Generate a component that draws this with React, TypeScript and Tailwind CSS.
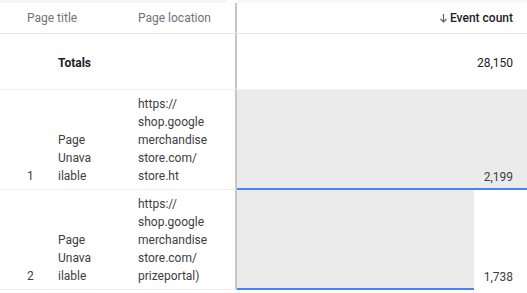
import { ReactNode } from "react";

type Row = {
  n: number;
  title: string[];
  location: string[];
  count: string;
  share: number;
};

const rows: Row[] = [
  {
    n: 1,
    title: ["Page", "Unava", "ilable"],
    location: ["https://", "shop.google", "merchandise", "store.com/", "store.ht"],
    count: "2,199",
    share: 1,
  },
  {
    n: 2,
    title: ["Page", "Unava", "ilable"],
    location: ["https://", "shop.google", "merchandise", "store.com/", "prizeportal)"],
    count: "1,738",
    share: 0.817,
  },
];

function Lines({ lines }: { lines: string[] }) {
  return (
    <div className="flex flex-col">
      {lines.map((l, i) => (
        <span key={i}>{l}</span>
      ))}
    </div>
  );
}

function LeftCell({ children, className = "" }: { children: ReactNode; className?: string }) {
  return (
    <div
      className={`w-[237px] shrink-0 grid grid-cols-[31px_80px_1fr] pl-[27px] bg-white border-r-2 border-r-[#c6c6c6] ${className}`}
    >
      {children}
    </div>
  );
}

export default function App() {
  return (
    <div className="w-[527px] h-[293px] overflow-hidden bg-white font-['Roboto',sans-serif] text-[12px] leading-[18px] text-[#3c4043]">
      {/* strip of the block above */}
      <div className="flex h-[3px]">
        <div className="w-[227px] bg-[#f4f4f4]" />
        <div className="w-[10px] bg-white" />
        <div className="flex-1 bg-[#f8f8f8]" />
      </div>

      {/* header */}
      <div className="flex h-[31px] border-b border-[#e6e6e6]">
        <LeftCell className="items-center text-[#6f7377]">
          <span className="col-span-2">Page title</span>
          <span>Page location</span>
        </LeftCell>
        <div className="flex-1 flex items-center justify-end pr-[14px] gap-[2px] font-medium text-[#202124]">
          <svg width="9" height="10" viewBox="0 0 9 10" fill="none" stroke="#5f6368" strokeWidth="1.2">
            <path d="M4.5 1v8M1.5 6l3 3 3-3" />
          </svg>
          <span>Event count</span>
        </div>
      </div>

      {/* totals */}
      <div className="flex h-[56px] border-b border-[#eeeeee]">
        <LeftCell className="items-center pt-[3px]">
          <span />
          <span className="font-bold text-[#202124]">Totals</span>
          <span />
        </LeftCell>
        <div className="flex-1 flex items-center justify-end pr-[14px] pt-[3px] text-[#202124]">
          28,150
        </div>
      </div>

      {rows.map((r) => (
        <div key={r.n} className="flex h-[100px]">
          <LeftCell className="items-end pb-[4px] border-b border-b-[#eeeeee]">
            <span>{r.n}</span>
            <Lines lines={r.title} />
            <Lines lines={r.location} />
          </LeftCell>
          <div className="relative flex-1 flex items-end justify-end pr-[14px] pb-[4px]">
            <div
              className="absolute left-0 top-0 bottom-0 bg-[#ebebeb] border-b-2 border-[#4285f4]"
              style={{ width: `${r.share * 100}%` }}
            />
            <span className="relative">{r.count}</span>
          </div>
        </div>
      ))}
    </div>
  );
}
